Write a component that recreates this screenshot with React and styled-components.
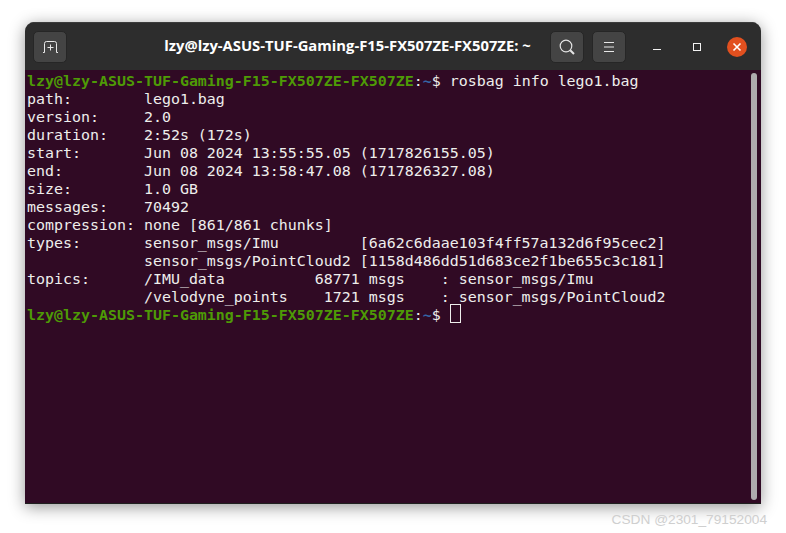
import React from 'react';
import styled, { createGlobalStyle } from 'styled-components';

const GlobalStyle = createGlobalStyle`
  html, body {
    margin: 0;
    padding: 0;
    background: #ffffff;
  }
`;

const Page = styled.div`
  position: relative;
  width: 786px;
  height: 533px;
  padding: 22px 25px 29px 25px;
  box-sizing: border-box;
  overflow: hidden;
`;

const Window = styled.div`
  height: 100%;
  display: flex;
  flex-direction: column;
  border-radius: 9px 9px 0 0;
  overflow: hidden;
`;

const Frame = styled.div`
  height: 100%;
  border-radius: 9px 9px 0 0;
  box-shadow: 0 3px 16px rgba(0, 0, 0, 0.42);
`;

const HeaderBar = styled.header`
  height: 48px;
  flex: none;
  display: flex;
  align-items: center;
  padding: 0 14px 0 8px;
  background: #2d2d2d;
  border-top: 1px solid #3c3c3c;
  box-sizing: border-box;
`;

const ToolButton = styled.button`
  width: 34px;
  height: 32px;
  margin-left: ${(p) => p.$gap || 0}px;
  padding: 0;
  display: flex;
  align-items: center;
  justify-content: center;
  background: #444444;
  border: 1px solid #262626;
  border-radius: 5px;
  box-sizing: border-box;
`;

const Title = styled.div`
  flex: 1;
  padding: 0 0 4px 78px;
  color: #ffffff;
  font-family: "Open Sans", "Noto Sans", sans-serif;
  font-size: 14.8px;
  font-weight: 700;
  text-align: center;
  white-space: nowrap;
`;

const WindowControl = styled.div`
  width: 20px;
  height: 20px;
  margin-left: ${(p) => p.$gap}px;
  display: flex;
  align-items: center;
  justify-content: center;
  border-radius: 50%;
  background: ${(p) => (p.$close ? '#e2501f' : 'transparent')};
`;

const Terminal = styled.main`
  flex: 1;
  position: relative;
  display: flex;
  background: #300a24;
  border-bottom: 1px solid #1f1f1f;
`;

const Output = styled.pre`
  margin: 0;
  padding: 2px 0 0 2px;
  color: #eeeeec;
  font-family: "DejaVu Sans Mono", monospace;
  font-size: 14.95px;
  line-height: 18px;
`;

const Host = styled.span`
  color: #4e9a06;
  font-weight: 700;
`;

const Cwd = styled.span`
  color: #3465a4;
  font-weight: 700;
`;

const Cursor = styled.span`
  display: inline-block;
  width: 11px;
  height: 19px;
  margin-top: -2px;
  vertical-align: top;
  border: 1px solid #eeeeec;
  box-sizing: border-box;
`;

const ScrollThumb = styled.div`
  position: absolute;
  top: 3px;
  right: 4px;
  bottom: 3px;
  width: 6px;
  border-radius: 3px;
  background: #aeaaad;
`;

const Watermark = styled.div`
  position: absolute;
  right: 19px;
  bottom: 6px;
  color: #cfcfcf;
  font-family: "Liberation Sans", sans-serif;
  font-size: 13.7px;
  white-space: nowrap;
`;

const NewTabIcon = () => (
  <svg width="15" height="12" viewBox="0 0 15 12" fill="none" stroke="#e8e8e8" strokeWidth="1">
    <path d="M0 11.5H1.5V2.5Q1.5 0.5 3.5 0.5H11.5Q13.5 0.5 13.5 2.5V11.5H15" />
    <path d="M7.5 3.5V9.5M4.5 6.5H10.5" />
  </svg>
);

const SearchIcon = () => (
  <svg width="16" height="16" viewBox="0 0 16 16" fill="none" stroke="#e4e4e4">
    <circle cx="7" cy="7" r="5.8" strokeWidth="1.2" />
    <path d="M11.2 11.2L15 15" strokeWidth="2" />
  </svg>
);

const MenuIcon = () => (
  <svg width="12" height="12" viewBox="0 0 12 12" stroke="#e8e8e8" strokeWidth="1">
    <path d="M1 1.5H11M1 6H11M1 10.5H11" />
  </svg>
);

const MinimizeIcon = () => (
  <svg width="10" height="10" viewBox="0 0 10 10" stroke="#f2f2f2" strokeWidth="1">
    <path d="M1 7.5H9" />
  </svg>
);

const MaximizeIcon = () => (
  <svg width="10" height="10" viewBox="0 0 10 10" fill="none" stroke="#f2f2f2" strokeWidth="1">
    <rect x="1.5" y="1.5" width="7" height="7" />
  </svg>
);

const CloseIcon = () => (
  <svg width="10" height="10" viewBox="0 0 10 10" stroke="#ffffff" strokeWidth="1.6">
    <path d="M1.5 1.5L8.5 8.5M8.5 1.5L1.5 8.5" />
  </svg>
);

const hostName = 'lzy@lzy-ASUS-TUF-Gaming-F15-FX507ZE-FX507ZE';

const infoLines = `path:        lego1.bag
version:     2.0
duration:    2:52s (172s)
start:       Jun 08 2024 13:55:55.05 (1717826155.05)
end:         Jun 08 2024 13:58:47.08 (1717826327.08)
size:        1.0 GB
messages:    70492
compression: none [861/861 chunks]
types:       sensor_msgs/Imu         [6a62c6daae103f4ff57a132d6f95cec2]
             sensor_msgs/PointCloud2 [1158d486dd51d683ce2f1be655c3c181]
topics:      /IMU_data          68771 msgs    : sensor_msgs/Imu
             /velodyne_points    1721 msgs    : sensor_msgs/PointCloud2`;

const Prompt = () => (
  <>
    <Host>{hostName}</Host>:<Cwd>~</Cwd>$
  </>
);

export default function App() {
  return (
    <Page>
      <GlobalStyle />
      <Frame>
        <Window>
          <HeaderBar>
            <ToolButton><NewTabIcon /></ToolButton>
            <Title>lzy@lzy-ASUS-TUF-Gaming-F15-FX507ZE-FX507ZE: ~</Title>
            <ToolButton><SearchIcon /></ToolButton>
            <ToolButton $gap={8}><MenuIcon /></ToolButton>
            <WindowControl $gap={21}><MinimizeIcon /></WindowControl>
            <WindowControl $gap={20}><MaximizeIcon /></WindowControl>
            <WindowControl $gap={20} $close><CloseIcon /></WindowControl>
          </HeaderBar>
          <Terminal>
            <Output>
              <Prompt /> rosbag info lego1.bag{'\n'}
              {infoLines}{'\n'}
              <Prompt /> <Cursor />
            </Output>
            <ScrollThumb />
          </Terminal>
        </Window>
      </Frame>
      <Watermark>CSDN @2301_79152004</Watermark>
    </Page>
  );
}
